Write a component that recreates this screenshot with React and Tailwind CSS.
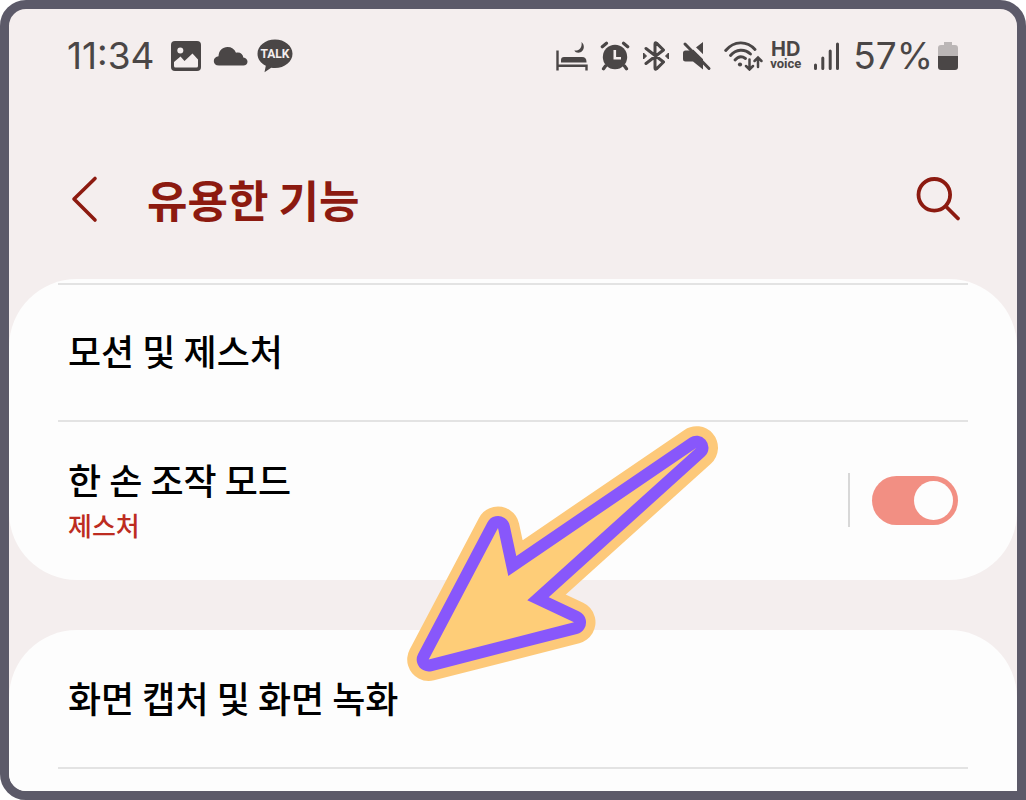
function ClockStatusIcons() {
  return (
    <div className="flex items-center gap-2">
      {/* gallery */}
      <svg width="30" height="30" viewBox="0 0 30 30" role="img" aria-label="사진">
        <rect x="0" y="0" width="30" height="30" rx="4" fill="#4a4646" />
        <circle cx="9.300" cy="9.500" r="3" fill="#f4eeee" />
        <path d="M3 23.500 V21 L9.500 15.500 L13.500 20 L21.500 12.500 L27 18.500 V25 Q27 26.500 25.500 26.500 H4.500 Q3 26.500 3 25 Z" fill="#f4eeee" />
      </svg>
      <svg width="36" height="20" viewBox="0 0 36 20" className="ml-1" role="img" aria-label="클라우드">
        <path d="M6 19.500 C2.500 19.500 0.800 17.500 0.800 15 C0.800 12 3 10.500 5.500 10.200 C5.800 4.500 9.500 1 14.500 1 C18.500 1 21.500 3 23 6.800 C27 5.800 30 8 30.300 11.600 C33 12 34.500 13.600 34.500 15.700 C34.500 18 32.800 19.500 30.300 19.500 Z" fill="#4a4646" />
      </svg>
      <svg width="36" height="34" viewBox="0 0 36 34" role="img" aria-label="카카오톡">
        <path d="M18 0.500 C27.700 0.500 35.500 6.800 35.500 14.700 C35.500 22.600 27.700 29 18 29 C16.700 29 15.400 28.900 14.200 28.700 L7.500 33.300 L8.800 26.800 C3.700 24.300 0.500 19.800 0.500 14.700 C0.500 6.800 8.300 0.500 18 0.500 Z" fill="#4a4646" />
        <text x="18" y="19" textAnchor="middle" fontFamily="Roboto, 'Liberation Sans', sans-serif" fontWeight="700" fontSize="12" fill="#f4eeee">TALK</text>
      </svg>
    </div>
  );
}

function DeviceStatusIcons() {
  return (
    <div className="flex items-center gap-3">
      {/* sleep mode */}
      <svg width="32" height="30" viewBox="0 0 32 30" role="img" aria-label="수면 모드">
        <g fill="none" stroke="#4a4646" strokeWidth="2.400">
          <path d="M1.500 9.500 V29.500 M1.500 24.800 H30.500 M30.500 23.500 V29.500" />
        </g>
        <path d="M5 21 V19 Q5 16 8 16 H26 Q30.500 16 30.500 21 V21.500 H5 Z" fill="#4a4646" />
        <path d="M25.500 1 C29 4 28.500 9.500 24.500 11.300 C22 12.400 19.500 11.500 18.300 9.500 C23 10.300 26.500 6.500 25.500 1 Z" fill="#4a4646" />
      </svg>
      {/* alarm */}
      <svg width="30" height="30" viewBox="0 0 30 30" role="img" aria-label="알람">
        <circle cx="15" cy="16" r="12.200" fill="#4a4646" />
        <g fill="none" stroke="#4a4646" strokeWidth="3.200" strokeLinecap="round">
          <path d="M2.300 5.700 L6.500 2.200 M27.700 5.700 L23.500 2.200 M5.500 25 L3.500 27.800 M24.500 25 L26.500 27.800" />
        </g>
        <path d="M14.800 9 V17.300 H21" fill="none" stroke="#f4eeee" strokeWidth="2.600" />
      </svg>
      {/* bluetooth */}
      <svg width="28" height="30" viewBox="0 0 28 30" role="img" aria-label="블루투스">
        <path d="M4 7.500 L21.500 21 L14.500 27.800 Q13 28.800 13 27 V3 Q13 1.200 14.500 2.200 L21.500 9 L4 22.500" fill="none" stroke="#4a4646" strokeWidth="3" strokeLinecap="round" strokeLinejoin="round" />
        <path d="M1.500 12 L4.500 15 L1.500 18 Z M26.500 12 L23.500 15 L26.500 18 Z" fill="#4a4646" stroke="#4a4646" strokeLinejoin="round" />
      </svg>
      {/* muted */}
      <svg width="30" height="30" viewBox="0 0 30 30" role="img" aria-label="음소거">
        <path d="M3.500 9.500 H10 L21 1 V28.500 L11 20.500 H3.500 Q1 20.500 1 18 V12 Q1 9.500 3.500 9.500 Z" fill="#4a4646" />
        <path d="M5.500 0.500 L31 25.500" stroke="#f4eeee" strokeWidth="3.600" />
        <path d="M3 3 L27 27.500" stroke="#4a4646" strokeWidth="3" strokeLinecap="round" />
      </svg>
      {/* wifi with traffic arrows */}
      <svg width="40" height="30" viewBox="0 0 40 30" role="img" aria-label="와이파이">
        <g fill="none" stroke="#4a4646" strokeWidth="2.900" strokeLinecap="round">
          <path d="M1.700 9.500 C10 -0.500 23 -0.500 31 8.500" />
          <path d="M6.500 14.500 C12 8 20.500 7.500 26.500 13" />
          <path d="M11 19 C14 15.500 18 15 21.500 17.500" />
          <path d="M25.500 18.500 V28 M22 25 L25.500 28.500 L29 25" strokeWidth="2.500" />
          <path d="M34 26 V17 M30.500 20 L34 16.500 L37.500 20" strokeWidth="2.500" />
        </g>
        <circle cx="16" cy="23.500" r="2.100" fill="#4a4646" />
      </svg>
    </div>
  );
}

function StatusBar() {
  return (
    <div className="flex h-[94px] items-center justify-between px-[58px] text-[#4a4646]">
      <div className="flex items-center gap-4">
        <time className="font-[Inter,'Liberation_Sans',sans-serif] text-[37px] leading-10">11:34</time>
        <ClockStatusIcons />
      </div>
      <div className="flex items-center">
        <DeviceStatusIcons />
        <div className="ml-[6px] flex flex-col items-center font-bold">
          <span className="font-[Inter,'Liberation_Sans',sans-serif] text-[20px] leading-4">HD</span>
          <span className="font-[Roboto,'Liberation_Sans',sans-serif] text-[13px] leading-[14px]">voice</span>
        </div>
        <svg width="28" height="30" viewBox="0 0 28 30" className="ml-3" role="img" aria-label="신호 세기">
          <path d="M2.500 24 V27.500 M9.800 17 V27.500 M17.200 10 V27.500 M24.500 3 V27.500" stroke="#4a4646" strokeWidth="3" strokeLinecap="round" />
        </svg>
        <span className="ml-3 font-[Inter,'Liberation_Sans',sans-serif] text-[37px] leading-10">57%</span>
        <svg width="22" height="30" viewBox="0 0 22 30" className="ml-1" role="img" aria-label="배터리">
          <path d="M7 1 H15 V4 H18 Q21 4 21 7 V16 H1 V7 Q1 4 4 4 H7 Z" fill="#bbb6b6" />
          <path d="M1 15 H21 V26 Q21 29 18 29 H4 Q1 29 1 26 Z" fill="#4a4646" />
        </svg>
      </div>
    </div>
  );
}

function Header() {
  return (
    <header className="flex h-[176px] items-center justify-between px-[56px] pt-4 text-[#8c1a10]">
      <div className="flex items-center gap-12">
        <button type="button" aria-label="뒤로" className="flex">
          <svg width="34" height="50" viewBox="0 0 34 50">
            <path d="M30 4.500 L9 25 L30 46" fill="none" stroke="currentColor" strokeWidth="3.600" strokeLinecap="round" strokeLinejoin="round" />
          </svg>
        </button>
        <h1 className="text-[44px] leading-[56px] font-bold">유용한 기능</h1>
      </div>
      <button type="button" aria-label="검색" className="flex">
        <svg width="46" height="46" viewBox="0 0 46 46">
          <circle cx="19.300" cy="18.800" r="15.800" fill="none" stroke="currentColor" strokeWidth="3.800" />
          <path d="M31 30.500 L43 42.500" stroke="currentColor" strokeWidth="3.800" strokeLinecap="round" />
        </svg>
      </button>
    </header>
  );
}

export default function App() {
  return (
    <div className="relative flex min-h-screen flex-col overflow-hidden rounded-[26px] rounded-br-none border-[9px] border-[#5c5a69] bg-[#f4eeee] font-['Noto_Sans_CJK_KR',sans-serif] text-black">
      <StatusBar />
      <Header />
      <main className="flex flex-1 flex-col gap-[50px]">
        <section className="rounded-[68px] bg-[#fdfdfd] px-[49px] pt-1">
          <a href="#motion" className="flex h-[137px] items-center border-t-2 border-[#e3e3e3] px-[10px] pb-[6px] text-[36px] leading-[44px] font-medium">
            모션 및 제스처
          </a>
          <div className="flex h-[160px] items-center justify-between border-t-2 border-[#e3e3e3] px-[10px] pb-[2px]">
            <label htmlFor="one-hand" className="flex flex-col">
              <span className="text-[36px] leading-[50px] font-medium">한 손 조작 모드</span>
              <span className="text-[26px] leading-[42px] font-medium text-[#bd2c21]">제스처</span>
            </label>
            <div className="flex items-center gap-[22px]">
              <span className="h-[54px] w-[2px] bg-[#d8d8d8]" />
              <input
                id="one-hand"
                type="checkbox"
                role="switch"
                defaultChecked
                className="flex h-[49px] w-[86px] appearance-none items-center rounded-full bg-[#bbb] p-[5px] before:size-[39px] before:rounded-full before:bg-[#fdfdfd] checked:justify-end checked:bg-[#f28f83]"
              />
            </div>
          </div>
        </section>
        <section className="flex-1 rounded-t-[68px] bg-[#fdfdfd] px-[49px]">
          <a href="#capture" className="flex h-[139px] items-center border-b-2 border-[#e3e3e3] px-[10px] pb-1 text-[36px] leading-[44px] font-medium">
            화면 캡처 및 화면 녹화
          </a>
        </section>
      </main>
      <svg width="314" height="258" viewBox="406 425 314 258" className="pointer-events-none absolute top-[416px] left-[397px]" aria-hidden="true">
        <g strokeLinejoin="round">
          <path d="M696.500 447.700 L508.300 576 L498 528 L428.700 659.500 L574 622.300 L527.300 600.300 Z" fill="#fdc97a" stroke="#fdc97a" strokeWidth="43" />
          <path d="M696.500 447.700 L508.300 576 L498 528 L428.700 659.500 L574 622.300 L527.300 600.300 Z" fill="none" stroke="#8857fb" strokeWidth="24" />
          <path d="M696.500 447.700 L508.300 576 L498 528 L428.700 659.500 L574 622.300 L527.300 600.300 Z" fill="#fecd78" />
        </g>
      </svg>
    </div>
  );
}
